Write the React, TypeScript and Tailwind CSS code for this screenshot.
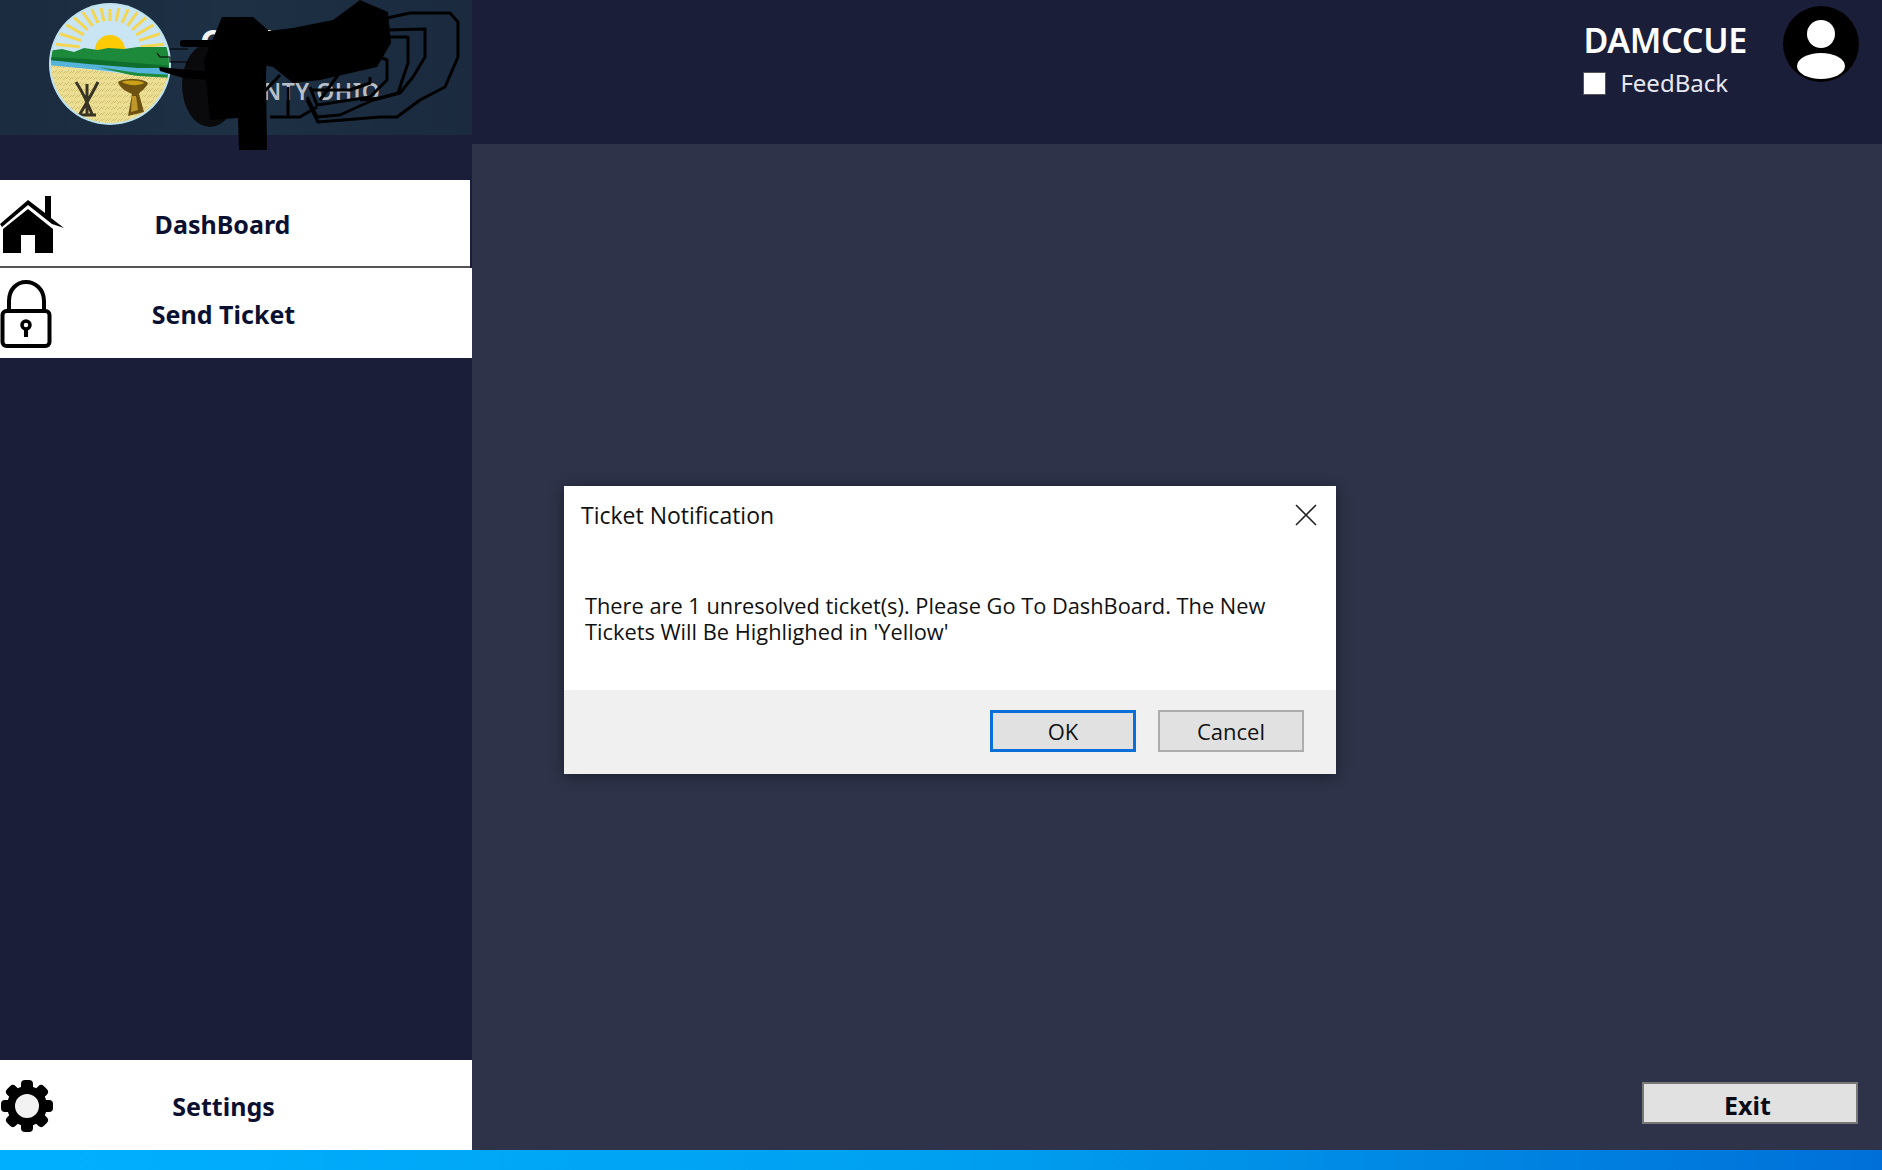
import React from "react";

const sansBold = "font-['Noto_Sans',sans-serif] font-bold";

function HomeIcon() {
  return (
    <svg viewBox="0 0 64 60" className="w-[64px] h-[60px] mt-[2px]">
      <path d="M0 30 L28 6 L45 19 L45 2 L51 2 L51 24 L64 34 L52 30 L28 11 L2 33 Z" fill="#000" />
      <path d="M28 15 L53 35 L53 59 L35 59 L35 41 L21 41 L21 59 L3 59 L3 35 Z" fill="#000" />
    </svg>
  );
}

function LockIcon() {
  return (
    <svg viewBox="0 0 54 70" className="w-[54px] h-[70px] mt-[1px]" fill="none" stroke="#000" strokeWidth="4">
      <path d="M9 32 V22 C9 10 17 3 26 3 C35 3 44 10 44 22 V32" />
      <rect x="2.5" y="32" width="47" height="35" rx="4" />
      <circle cx="26" cy="46" r="4" strokeWidth="3.5" />
      <path d="M26 50 V58" strokeWidth="4" />
    </svg>
  );
}

function GearIcon() {
  return (
    <svg viewBox="0 0 54 54" className="w-[54px] h-[54px] mt-[2px]">
      <g fill="#000">
        <circle cx="27" cy="27" r="20" />
        {[0, 45, 90, 135, 180, 225, 270, 315].map((a) => (
          <rect key={a} x="21" y="1" width="12" height="12" rx="4" transform={`rotate(${a} 27 27)`} />
        ))}
      </g>
      <circle cx="27" cy="27" r="12" fill="#f2f2f2" />
    </svg>
  );
}

function Seal() {
  const rays = Array.from({ length: 15 }, (_, i) => -84 + i * 12);
  return (
    <svg viewBox="0 0 124 124" className="w-[124px] h-[124px]">
      <defs>
        <clipPath id="seal">
          <circle cx="62" cy="62" r="59" />
        </clipPath>
        <pattern id="wheat" width="6" height="6" patternUnits="userSpaceOnUse">
          <rect width="6" height="6" fill="#ecdf94" />
          <path d="M0 5 L3 2 M3 6 L6 3" stroke="#cdbb6a" strokeWidth="0.9" />
        </pattern>
      </defs>
      <circle cx="62" cy="62" r="61" fill="#bfe3ee" />
      <g clipPath="url(#seal)">
        <rect width="124" height="64" fill="#c9e4f3" />
        {rays.map((a) => {
          const inner = 29 + Math.abs(a) * 0.02;
          const outer = 41 + Math.abs(a) * 0.16;
          return (
            <path
              key={a}
              d={`M62 ${48 - inner} L62 ${48 - outer}`}
              stroke="#f2d654"
              strokeWidth="3"
              transform={`rotate(${a} 62 48)`}
            />
          );
        })}
        <circle cx="62" cy="48" r="15" fill="#fccb05" />
        <path d="M0 49 L14 47 L26 50 L36 46 L50 48 L60 46 L76 47 L90 45 L124 45 L124 72 L90 66 L40 60 L0 58 Z" fill="#1c8a3a" />
        <path d="M0 55 L40 57 L124 64 L124 72 L60 66 L0 60 Z" fill="#0f6e2d" />
        <path d="M0 58 L40 62 L90 66 L124 66 L124 74 L90 72 L40 67 L0 64 Z" fill="#55b3dc" />
        <path d="M50 65 L90 71 L124 73 L124 78 L90 75 Z" fill="#1e8c3c" />
        <path d="M0 63 L40 67 L90 74 L124 76 L124 124 L0 124 Z" fill="url(#wheat)" />
        <path d="M28 80 Q36 92 44 112 M50 80 Q44 92 32 112 M39 82 L39 112 M30 113 L48 113" stroke="#3a3424" strokeWidth="3" fill="none" />
        <path d="M70 80 C75 76 95 76 100 81 C98 87 92 89 91 92 L96 110 L80 114 L84 92 C80 90 72 87 70 80 Z" fill="#6d5212" />
        <path d="M74 80 C78 78 92 78 96 81 C91 84 80 84 74 80 Z" fill="#c9a018" />
        <path d="M84 94 L88 94 L90 108 L83 110 Z" fill="#c0982a" />
      </g>
    </svg>
  );
}

function Scribble() {
  return (
    <svg viewBox="0 0 320 155" className="absolute left-[160px] top-0 w-[320px] h-[155px] overflow-visible" fill="none" stroke="#000">
      <ellipse cx="50" cy="85" rx="28" ry="42" fill="#0a0a0d" stroke="none" />
      <g fill="#000" stroke="none">
        <path d="M62 17 H93 L108 30 L106 75 L107 150 H79 L78 118 L50 120 L44 60 Z" />
        <path d="M100 32 L133 28 L173 20 L200 0 L228 12 L231 43 L217 67 L160 80 L133 83 L113 67 L100 64 Z" />
        <rect x="20" y="40" width="60" height="7" rx="3" />
        <path d="M-1 67 L50 72 L50 80 L23 78 L0 71 Z" />
      </g>
      <g strokeWidth="3" strokeLinejoin="round">
        <path d="M227 18 L250 13 L290 13 L298 22 L298 57 L285 87 L260 100 L237 117 L220 117 L158 122 L147 100" />
        <path d="M227 30 L265 29 L265 57 L253 77 L240 93 L213 100 L180 115 L157 117 L147 97" />
        <path d="M230 37 L248 37 L248 63 L238 93 L220 98 L200 100" />
        <path d="M220 57 L227 60 L227 80 L210 97 L157 105 L150 87" />
        <path d="M210 77 L210 83 L190 90 L150 90" />
        <path d="M213 65 L183 68 L160 100" />
        <path d="M128 87 L128 117 L110 117 M128 117 L140 117 L157 107" />
        <path d="M103 93 L120 75" />
      </g>
      <g strokeWidth="1.2">
        <path d="M10 49 H28 M-3 53 L0 57 H10 V62 H28" />
      </g>
    </svg>
  );
}

function NavButton({ icon, label, className }: { icon: React.ReactNode; label: string; className: string }) {
  return (
    <div className={`relative flex items-center justify-center bg-white text-[#0c1030] text-[25px] ${sansBold} ${className}`}>
      <div className="absolute left-0 top-0 bottom-0 flex items-center">{icon}</div>
      <span className="mr-[25px] mt-[3px]">{label}</span>
    </div>
  );
}

export default function App() {
  return (
    <div className="relative flex flex-col w-[1882px] h-[1170px] bg-[#2e3349] overflow-hidden">
      <div className="flex flex-1 min-h-0">
        <aside className="flex flex-col w-[472px] bg-[#1a1e38]">
          <div className="relative flex items-center h-[135px] pl-[48px] pb-[7px] bg-gradient-to-r from-[#1b2b40] via-[#1d3044] to-[#1b2a3e]">
            <Seal />
            <div className="absolute left-[200px] top-[24px] text-[#f2f2f2] text-[34px] font-bold font-['Noto_Sans',sans-serif] leading-none">COUNTY</div>
            <div className="absolute left-[263px] top-[80px] text-[#b9bfc6] text-[23px] font-semibold tracking-[0.5px] font-['Noto_Sans',sans-serif] leading-none">NTY OHIO</div>
            <Scribble />
          </div>
          <div className="h-[45px] shrink-0" />
          <NavButton icon={<HomeIcon />} label="DashBoard" className="h-[88px] mr-[2px] border-b-2 border-[#555]" />
          <NavButton icon={<LockIcon />} label="Send Ticket" className="h-[90px]" />
          <div className="flex-1" />
          <NavButton icon={<GearIcon />} label="Settings" className="h-[90px]" />
        </aside>
        <div className="flex flex-col flex-1">
          <header className="flex justify-end h-[144px] bg-[#1a1e38] pt-[6px] pr-[23px] shrink-0">
            <div className="flex flex-col mr-[36px] mt-[16px]">
              <span className="text-white text-[34px] leading-[36px] font-semibold font-['Noto_Sans',sans-serif] tracking-[-0.3px]">DAMCCUE</span>
              <div className="flex items-center gap-[14px] mt-[10px]">
                <span className="w-[23px] h-[23px] bg-white border border-[#555] block" />
                <span className="text-[#e6e8f2] text-[24px] leading-[30px] font-['Noto_Sans',sans-serif]">FeedBack</span>
              </div>
            </div>
            <svg viewBox="0 0 76 76" className="w-[76px] h-[76px]">
              <circle cx="38" cy="38" r="38" fill="#000" />
              <circle cx="38" cy="28" r="14" fill="#fff" />
              <ellipse cx="38" cy="60" rx="24" ry="13" fill="#fff" />
            </svg>
          </header>
          <main className="flex flex-1 justify-end items-end pr-[24px] pb-[26px]">
            <button className={`w-[216px] h-[42px] pr-[5px] pt-[5px] bg-[#e1e1e1] border-2 border-[#777] text-[#0a0a14] text-[25px] leading-none ${sansBold}`}>Exit</button>
          </main>
        </div>
      </div>
      <div className="h-[20px] shrink-0 bg-gradient-to-r from-[#00b0ff] via-[#00a0f0] to-[#0070d8]" />

      <div className="absolute left-[564px] top-[486px] flex flex-col w-[772px] h-[288px] bg-white shadow-[0_2px_14px_rgba(0,0,0,0.45)] font-['Open_Sans',sans-serif] text-[#111]">
        <div className="flex flex-col flex-1 pl-[17px] pr-[16px] pt-[13px]">
          <div className="flex items-center justify-between">
            <span className="text-[23px] leading-[32px]">Ticket Notification</span>
            <svg viewBox="0 0 22 22" className="w-[22px] h-[22px] mr-[3px]" stroke="#222" strokeWidth="1.6">
              <path d="M1 1 L21 21 M21 1 L1 21" />
            </svg>
          </div>
          <p className="mt-[62px] ml-[4px] w-[700px] text-[21.8px] leading-[26px]">
            There are 1 unresolved ticket(s). Please Go To DashBoard. The New Tickets Will Be Highlighed in 'Yellow'
          </p>
        </div>
        <div className="flex justify-end items-start gap-[22px] h-[84px] pt-[20px] pr-[32px] bg-[#f0f0f0]">
          <button className="w-[146px] h-[42px] bg-[#e1e1e1] border-[3px] border-[#0a6fd6] text-[22px] text-[#111]">OK</button>
          <button className="w-[146px] h-[42px] bg-[#e1e1e1] border-2 border-[#adadad] text-[22px] text-[#111]">Cancel</button>
        </div>
      </div>
    </div>
  );
}
